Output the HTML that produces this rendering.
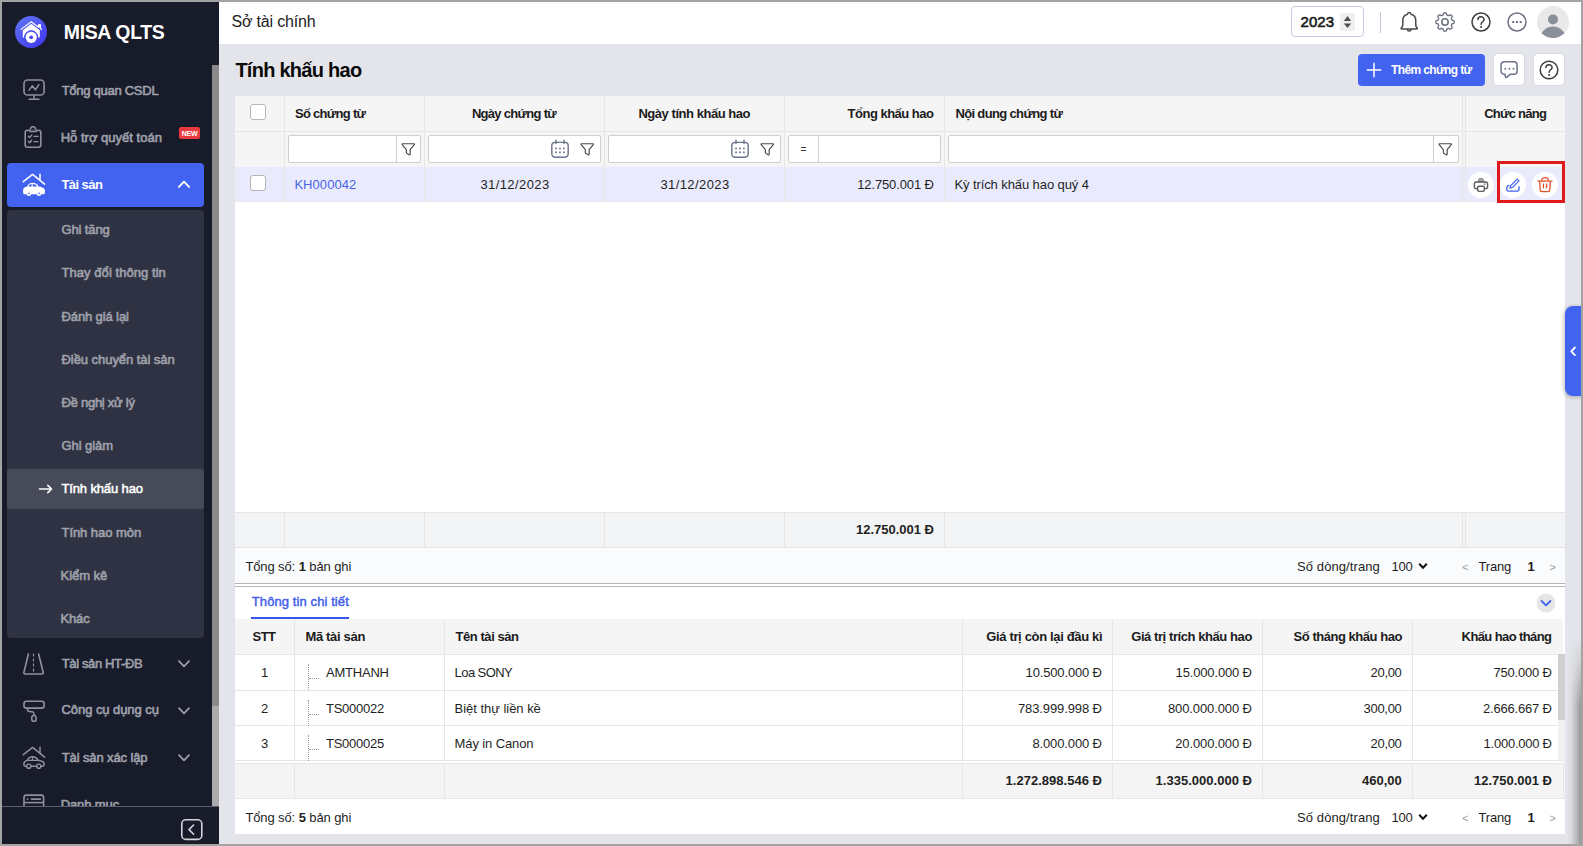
<!DOCTYPE html>
<html lang="vi"><head><meta charset="utf-8"><title>MISA QLTS - Tính khấu hao</title>
<style>
html,body{margin:0;padding:0;}
body{width:1583px;height:846px;overflow:hidden;position:relative;background:#e4e5ea;font-family:"Liberation Sans", sans-serif;}
.r{position:absolute;box-sizing:border-box;}
.t{position:absolute;white-space:nowrap;line-height:20px;height:20px;font-family:"Liberation Sans", sans-serif;}
b{font-weight:700;}
</style></head><body>
<div class="r" style="left:2px;top:2px;width:217px;height:842px;background:#181b2a;"></div>
<div class="r" style="left:212px;top:65px;width:7px;height:641px;background:#8a8a8a;"></div>
<div class="r" style="left:212px;top:706px;width:7px;height:100px;background:#ababab;"></div>
<svg class="r" style="left:15px;top:16px;" width="32" height="32" viewBox="0 0 32 32" fill="none"><defs><linearGradient id="lg" x1="0.1" y1="0" x2="0.9" y2="1"><stop offset="0" stop-color="#5d75f3"/><stop offset="1" stop-color="#4236ee"/></linearGradient></defs>
<circle cx="16" cy="16" r="16" fill="url(#lg)"/>
<path d="M6 13.4 L16.2 5.7 L23.6 11.3 V8.6 H25.4 V12.6 L26.6 13.5" stroke="#fff" stroke-width="1.1" fill="none" stroke-linejoin="round" stroke-linecap="round"/>
<path d="M23.8 8.8 H25.2 V12 L23.8 11 Z" fill="#fff"/>
<path d="M7.8 14.2 L16.2 7.8 L24.8 14.2 V21.6 H23.2 A7 7 0 0 0 9.2 21.6 H7.8 Z" fill="#fff"/>
<circle cx="16.2" cy="21.3" r="6.6" fill="none" stroke="#4a4ff0" stroke-width="1"/>
<circle cx="16.2" cy="21.3" r="5.6" fill="#fff"/>
<circle cx="16.2" cy="21.3" r="1.9" fill="#4747ee"/></svg>
<span class="t" style="left:63.80px;top:22px;font-size:19.5px;font-weight:700;color:#ffffff;letter-spacing:-0.376px;">MISA QLTS</span>
<svg class="r" style="left:22px;top:78px;" width="24" height="24" viewBox="0 0 24 24" fill="none"><rect x="2" y="2" width="20.1" height="15" rx="3.6" stroke="#8f919d" stroke-width="1.6"/>
<path d="M12 17.4 V21.3 M7.2 21.3 H17" stroke="#8f919d" stroke-width="1.5" stroke-linecap="round"/>
<path d="M7.2 12.2 L10.2 7.8 L13.4 11.8 L16.9 6.7" stroke="#8f919d" stroke-width="1.5" stroke-linecap="round" stroke-linejoin="round"/></svg>
<span class="t" style="left:61.70px;top:81px;font-size:13px;font-weight:400;color:#9fa1ab;letter-spacing:-0.271px;-webkit-text-stroke:0.6px #9fa1ab;">Tổng quan CSDL</span>
<svg class="r" style="left:22px;top:125px;" width="24" height="24" viewBox="0 0 24 24" fill="none"><rect x="3.2" y="5.2" width="15.6" height="17" rx="2.4" stroke="#8f919d" stroke-width="1.6"/>
<path d="M7.6 5.2 V6.4 H14.4 V5.2 M8.4 4.6 C8.4 0.9 13.6 0.9 13.6 4.6" stroke="#8f919d" stroke-width="1.5" stroke-linejoin="round" fill="#181b2a"/>
<path d="M6.4 11.2 L7.7 12.5 L9.7 10.1 M12 11.4 H16 M6.4 16.4 L7.7 17.7 L9.7 15.3 M12 16.6 H16" stroke="#8f919d" stroke-width="1.4" stroke-linecap="round" stroke-linejoin="round"/></svg>
<span class="t" style="left:60.70px;top:128px;font-size:13px;font-weight:400;color:#9fa1ab;letter-spacing:0.013px;-webkit-text-stroke:0.6px #9fa1ab;">Hỗ trợ quyết toán</span>
<div class="r" style="left:179px;top:127px;width:21px;height:12px;background:#e83a3f;border-radius:2px;"></div>
<span class="t" style="left:189.50px;top:124px;font-size:7px;font-weight:700;color:#ffffff;letter-spacing:-0.200px;transform:translateX(-50%);">NEW</span>
<div class="r" style="left:7px;top:163px;width:197px;height:44px;background:#4262f0;border-radius:4px;"></div>
<svg class="r" style="left:22px;top:173px;" width="24" height="24" viewBox="0 0 24 24" fill="none"><path d="M1.3 8.7 L10.6 1.4 L22.6 11.2 M18 7.2 V1.2" stroke="#ffffff" stroke-width="1.5" stroke-linecap="round" stroke-linejoin="round"/><path d="M1.1 17.6 C1.1 15 2.6 14.2 5 13.6 C6.2 11 7.6 9.7 10.6 9.7 C13.6 9.7 15.2 11 16.6 13.4 C20.6 14 22.9 15 22.9 17.8 V19.4 C22.9 20.6 22 21.3 21 21.3 H3 C2 21.3 1.1 20.6 1.1 19.4 Z" fill="#ffffff"/><circle cx="6.9" cy="20.8" r="2.3" fill="#ffffff"/><circle cx="17" cy="20.8" r="2.3" fill="#ffffff"/><circle cx="6.9" cy="20.4" r="0.8" fill="#4262f0"/><circle cx="17" cy="20.4" r="0.8" fill="#4262f0"/><path d="M6.3 13.4 C6.9 11.9 7.8 11.1 9.6 11 V13.4 Z M10.7 11 C12.8 11 14 11.8 15 13.4 H10.7 Z" fill="#4262f0"/></svg>
<span class="t" style="left:61.40px;top:175px;font-size:13px;font-weight:700;color:#ffffff;letter-spacing:-0.542px;">Tài sản</span>
<svg class="r" style="left:178px;top:180px;" width="12" height="8" viewBox="0 0 12 8" fill="none"><path d="M1 6.8 L6 1.7 L11 6.8" stroke="#fff" stroke-width="1.9" stroke-linecap="round" stroke-linejoin="round"/></svg>
<div class="r" style="left:7px;top:210px;width:197px;height:428px;background:#2f3242;border-radius:4px;"></div>
<div class="r" style="left:7px;top:469px;width:197px;height:40px;background:#464a59;border-radius:3px;"></div>
<span class="t" style="left:61.50px;top:220px;font-size:13px;font-weight:400;color:#9fa1ab;letter-spacing:-0.131px;-webkit-text-stroke:0.6px #9fa1ab;">Ghi tăng</span>
<span class="t" style="left:61.50px;top:263px;font-size:13px;font-weight:400;color:#9fa1ab;letter-spacing:0.058px;-webkit-text-stroke:0.6px #9fa1ab;">Thay đổi thông tin</span>
<span class="t" style="left:61.50px;top:307px;font-size:13px;font-weight:400;color:#9fa1ab;letter-spacing:-0.115px;-webkit-text-stroke:0.6px #9fa1ab;">Đánh giá lại</span>
<span class="t" style="left:61.50px;top:350px;font-size:13px;font-weight:400;color:#9fa1ab;letter-spacing:-0.053px;-webkit-text-stroke:0.6px #9fa1ab;">Điều chuyển tài sản</span>
<span class="t" style="left:61.50px;top:393px;font-size:13px;font-weight:400;color:#9fa1ab;letter-spacing:-0.260px;-webkit-text-stroke:0.6px #9fa1ab;">Đề nghị xử lý</span>
<span class="t" style="left:61.50px;top:436px;font-size:13px;font-weight:400;color:#9fa1ab;letter-spacing:-0.056px;-webkit-text-stroke:0.6px #9fa1ab;">Ghi giảm</span>
<span class="t" style="left:61.45px;top:479px;font-size:13px;font-weight:400;color:#ffffff;letter-spacing:-0.132px;-webkit-text-stroke:0.5px #ffffff;">Tính khấu hao</span>
<span class="t" style="left:61.50px;top:523px;font-size:13px;font-weight:400;color:#9fa1ab;letter-spacing:-0.053px;-webkit-text-stroke:0.6px #9fa1ab;">Tính hao mòn</span>
<span class="t" style="left:60.50px;top:566px;font-size:13px;font-weight:400;color:#9fa1ab;letter-spacing:-0.022px;-webkit-text-stroke:0.6px #9fa1ab;">Kiểm kê</span>
<span class="t" style="left:60.50px;top:609px;font-size:13px;font-weight:400;color:#9fa1ab;letter-spacing:-0.144px;-webkit-text-stroke:0.6px #9fa1ab;">Khác</span>
<svg class="r" style="left:38px;top:483px;" width="16" height="12" viewBox="0 0 16 12" fill="none"><path d="M1.5 6 H13.5 M9.8 2.4 L13.6 6 L9.8 9.6" stroke="#fff" stroke-width="1.6" stroke-linecap="round" stroke-linejoin="round"/></svg>
<svg class="r" style="left:22px;top:652px;" width="24" height="24" viewBox="0 0 24 24" fill="none"><path d="M6.4 2 L1.9 20.2 C1.6 21.4 2.2 22 3.2 22 H19.9 C20.9 22 21.5 21.4 21.2 20.2 L16.6 2" stroke="#8f919d" stroke-width="1.6" stroke-linecap="round" stroke-linejoin="round"/>
<path d="M11.5 1.4 V20" stroke="#8f919d" stroke-width="1.2" stroke-dasharray="3.2 1.8"/></svg>
<span class="t" style="left:61.70px;top:654px;font-size:13px;font-weight:400;color:#9fa1ab;letter-spacing:-0.356px;-webkit-text-stroke:0.6px #9fa1ab;">Tài sản HT-ĐB</span>
<svg class="r" style="left:178px;top:659.5px;" width="12" height="8" viewBox="0 0 12 8" fill="none"><path d="M1 1.2 L6 6.3 L11 1.2" stroke="#9fa1ab" stroke-width="1.7" stroke-linecap="round" stroke-linejoin="round"/></svg>
<svg class="r" style="left:22px;top:699px;" width="24" height="24" viewBox="0 0 24 24" fill="none"><rect x="2" y="2.3" width="20.1" height="6.8" rx="2.4" stroke="#8f919d" stroke-width="1.6"/>
<path d="M5.5 9.4 V10.6 C5.5 11.9 6.2 12.4 7.4 12.5 L10 12.7 C11.4 12.9 11.9 13.6 11.9 14.6 V15.8" stroke="#8f919d" stroke-width="1.6" stroke-linecap="round"/>
<rect x="9.8" y="16.5" width="4.3" height="5.8" rx="2.1" stroke="#8f919d" stroke-width="1.6"/></svg>
<span class="t" style="left:61.50px;top:700px;font-size:13px;font-weight:400;color:#9fa1ab;letter-spacing:-0.062px;-webkit-text-stroke:0.6px #9fa1ab;">Công cụ dụng cụ</span>
<svg class="r" style="left:178px;top:706.5px;" width="12" height="8" viewBox="0 0 12 8" fill="none"><path d="M1 1.2 L6 6.3 L11 1.2" stroke="#9fa1ab" stroke-width="1.7" stroke-linecap="round" stroke-linejoin="round"/></svg>
<svg class="r" style="left:22px;top:746px;" width="24" height="24" viewBox="0 0 24 24" fill="none"><path d="M1.3 8.7 L10.6 1.4 L22.6 11.2 M18 7.2 V1.2" stroke="#8f919d" stroke-width="1.5" stroke-linecap="round" stroke-linejoin="round"/><path d="M1.9 17.4 C1.9 15.6 3 15 5.2 14.4 C6.4 11.8 7.8 10.7 10.6 10.7 C13.4 10.7 14.8 11.8 16.2 14.2 C20 14.8 22.1 15.6 22.1 17.8 V18.6 C22.1 19.6 21.4 20.2 20.6 20.2 H3.4 C2.6 20.2 1.9 19.6 1.9 18.6 Z" stroke="#8f919d" stroke-width="1.5" fill="none"/><circle cx="6.8" cy="20.2" r="2.1" fill="#181b2a" stroke="#8f919d" stroke-width="1.4"/><circle cx="16.8" cy="20.2" r="2.1" fill="#181b2a" stroke="#8f919d" stroke-width="1.4"/><path d="M5.6 14.4 H16 M10.4 11 V14.4" stroke="#8f919d" stroke-width="1.1"/></svg>
<span class="t" style="left:61.70px;top:748px;font-size:13px;font-weight:400;color:#9fa1ab;letter-spacing:-0.114px;-webkit-text-stroke:0.6px #9fa1ab;">Tài sản xác lập</span>
<svg class="r" style="left:178px;top:753.5px;" width="12" height="8" viewBox="0 0 12 8" fill="none"><path d="M1 1.2 L6 6.3 L11 1.2" stroke="#9fa1ab" stroke-width="1.7" stroke-linecap="round" stroke-linejoin="round"/></svg>
<svg class="r" style="left:22px;top:793px;" width="24" height="24" viewBox="0 0 24 24" fill="none"><rect x="2" y="2.1" width="19.6" height="18" rx="2.4" stroke="#8f919d" stroke-width="1.6"/>
<path d="M2 9.6 H21.6" stroke="#8f919d" stroke-width="1.5"/><circle cx="5.6" cy="6.1" r="0.9" fill="#8f919d"/><path d="M9.4 6.1 H18.4" stroke="#8f919d" stroke-width="1.6" stroke-linecap="round"/></svg>
<span class="t" style="left:60.70px;top:795px;font-size:13px;font-weight:400;color:#9fa1ab;letter-spacing:-0.107px;-webkit-text-stroke:0.6px #9fa1ab;">Danh mục</span>
<div class="r" style="left:2px;top:806px;width:217px;height:38px;background:#181b2a;border-top:1px solid #5d606e;"></div>
<svg class="r" style="left:181px;top:819px;" width="22" height="22" viewBox="0 0 22 22" fill="none"><rect x="0.8" y="0.8" width="20" height="19.6" rx="4" stroke="#d4d5da" stroke-width="1.6"/>
<path d="M12.6 6 L8 10.6 L12.6 15.2" stroke="#d4d5da" stroke-width="1.6" stroke-linecap="round" stroke-linejoin="round"/></svg>
<div class="r" style="left:219px;top:2px;width:1362px;height:42px;background:#ffffff;"></div>
<span class="t" style="left:231.40px;top:12px;font-size:16px;font-weight:400;color:#212121;letter-spacing:-0.163px;">Sở tài chính</span>
<div class="r" style="left:1291px;top:6px;width:73px;height:31px;background:#ffffff;border:1px solid #c6cce0;border-radius:4px;"></div>
<span class="t" style="left:1300.50px;top:12px;font-size:15px;font-weight:400;color:#1c1c1c;letter-spacing:0.058px;-webkit-text-stroke:0.6px #1c1c1c;">2023</span>
<div class="r" style="left:1340px;top:13px;width:15px;height:18px;background:#f0f0f0;"></div>
<svg class="r" style="left:1340px;top:13px;" width="15" height="18" viewBox="0 0 15 18" fill="none"><path d="M7.5 3 L11.2 8 H3.8 Z M7.5 15 L11.2 10.4 H3.8 Z" fill="#505050"/></svg>
<div class="r" style="left:1380px;top:12px;width:1px;height:21px;background:#c2c7d6;"></div>
<svg class="r" style="left:1397px;top:10px;" width="24" height="24" viewBox="0 0 24 24" fill="none"><path d="M12.2 2.6 C13.2 2.6 13.8 3.3 13.9 4.3 C17 5 18.75 7.2 18.75 10.6 V14.4 C18.75 16.1 19.2 17 20 17.8 C20.6 18.4 20.3 19 19.5 19 H4.9 C4.1 19 3.8 18.4 4.4 17.8 C5.2 17 5.85 16.1 5.85 14.4 V10.6 C5.85 7.2 7.4 5 10.5 4.3 C10.6 3.3 11.2 2.6 12.2 2.6 Z" stroke="#484848" stroke-width="1.5" stroke-linejoin="round"/>
<path d="M10.3 19.6 C10.6 21.4 13.8 21.4 14.1 19.6" stroke="#484848" stroke-width="1.4" stroke-linecap="round"/></svg>
<svg class="r" style="left:1433px;top:10px;" width="24" height="24" viewBox="0 0 24 24" fill="none"><path d="M12.00 2.80 L12.36 2.82 L12.72 2.88 L13.06 3.04 L13.36 3.40 L13.59 4.01 L13.77 4.62 L13.98 4.99 L14.21 5.19 L14.46 5.33 L14.72 5.44 L14.98 5.54 L15.25 5.62 L15.56 5.65 L15.97 5.53 L16.53 5.22 L17.12 4.95 L17.58 4.92 L17.94 5.05 L18.24 5.25 L18.51 5.49 L18.75 5.76 L18.95 6.06 L19.08 6.42 L19.05 6.88 L18.78 7.47 L18.47 8.03 L18.35 8.44 L18.38 8.75 L18.46 9.02 L18.56 9.28 L18.67 9.54 L18.81 9.79 L19.01 10.02 L19.38 10.23 L19.99 10.41 L20.60 10.64 L20.96 10.94 L21.12 11.28 L21.18 11.64 L21.20 12.00 L21.18 12.36 L21.12 12.72 L20.96 13.06 L20.60 13.36 L19.99 13.59 L19.38 13.77 L19.01 13.98 L18.81 14.21 L18.67 14.46 L18.56 14.72 L18.46 14.98 L18.38 15.25 L18.35 15.56 L18.47 15.97 L18.78 16.53 L19.05 17.12 L19.08 17.58 L18.95 17.94 L18.75 18.24 L18.51 18.51 L18.24 18.75 L17.94 18.95 L17.58 19.08 L17.12 19.05 L16.53 18.78 L15.97 18.47 L15.56 18.35 L15.25 18.38 L14.98 18.46 L14.72 18.56 L14.46 18.67 L14.21 18.81 L13.98 19.01 L13.77 19.38 L13.59 19.99 L13.36 20.60 L13.06 20.96 L12.72 21.12 L12.36 21.18 L12.00 21.20 L11.64 21.18 L11.28 21.12 L10.94 20.96 L10.64 20.60 L10.41 19.99 L10.23 19.38 L10.02 19.01 L9.79 18.81 L9.54 18.67 L9.28 18.56 L9.02 18.46 L8.75 18.38 L8.44 18.35 L8.03 18.47 L7.47 18.78 L6.88 19.05 L6.42 19.08 L6.06 18.95 L5.76 18.75 L5.49 18.51 L5.25 18.24 L5.05 17.94 L4.92 17.58 L4.95 17.12 L5.22 16.53 L5.53 15.97 L5.65 15.56 L5.62 15.25 L5.54 14.98 L5.44 14.72 L5.33 14.46 L5.19 14.21 L4.99 13.98 L4.62 13.77 L4.01 13.59 L3.40 13.36 L3.04 13.06 L2.88 12.72 L2.82 12.36 L2.80 12.00 L2.82 11.64 L2.88 11.28 L3.04 10.94 L3.40 10.64 L4.01 10.41 L4.62 10.23 L4.99 10.02 L5.19 9.79 L5.33 9.54 L5.44 9.28 L5.54 9.02 L5.62 8.75 L5.65 8.44 L5.53 8.03 L5.22 7.47 L4.95 6.88 L4.92 6.42 L5.05 6.06 L5.25 5.76 L5.49 5.49 L5.76 5.25 L6.06 5.05 L6.42 4.92 L6.88 4.95 L7.47 5.22 L8.03 5.53 L8.44 5.65 L8.75 5.62 L9.02 5.54 L9.28 5.44 L9.54 5.33 L9.79 5.19 L10.02 4.99 L10.23 4.62 L10.41 4.01 L10.64 3.40 L10.94 3.04 L11.28 2.88 L11.64 2.82 Z" stroke="#6c7182" stroke-width="1.4" stroke-linejoin="round"/><circle cx="12" cy="12" r="3.2" stroke="#6c7182" stroke-width="1.5"/></svg>
<svg class="r" style="left:1469px;top:10px;" width="24" height="24" viewBox="0 0 24 24" fill="none"><circle cx="12" cy="12" r="9" stroke="#3c3c3c" stroke-width="1.5"/><path d="M8.9 9.6 C8.9 5.9 15.1 5.9 15.1 9.5 C15.1 11.8 12.1 11.7 12.1 14.2" stroke="#3c3c3c" stroke-width="1.5" stroke-linecap="round" fill="none"/><circle cx="12.1" cy="17" r="1" fill="#3c3c3c"/></svg>
<svg class="r" style="left:1505px;top:10px;" width="24" height="24" viewBox="0 0 24 24" fill="none"><circle cx="12" cy="12" r="9" stroke="#6c7182" stroke-width="1.5"/><rect x="7.3" y="11" width="2" height="2" fill="#6c7182"/><rect x="11" y="11" width="2" height="2" fill="#6c7182"/><rect x="14.7" y="11" width="2" height="2" fill="#6c7182"/></svg>
<svg class="r" style="left:1537px;top:5.5px;" width="32" height="32" viewBox="0 0 32 32" fill="none"><defs><clipPath id="av"><circle cx="16" cy="16" r="16"/></clipPath></defs><circle cx="16" cy="16" r="16" fill="#e9e9e9"/>
<g clip-path="url(#av)"><circle cx="16" cy="13.4" r="5" fill="#8b8e9b"/><ellipse cx="16" cy="32" rx="12.6" ry="11.4" fill="#8b8e9b"/></g></svg>
<span class="t" style="left:235.40px;top:60px;font-size:20px;font-weight:700;color:#0a0a0a;letter-spacing:-0.737px;">Tính khấu hao</span>
<div class="r" style="left:1358px;top:54px;width:127px;height:32px;background:#4262f0;border-radius:4px;"></div>
<svg class="r" style="left:1366px;top:62px;" width="16" height="16" viewBox="0 0 16 16" fill="none"><path d="M8 1.2 V14.8 M1.2 8 H14.8" stroke="#fff" stroke-width="1.5" stroke-linecap="round"/></svg>
<span class="t" style="left:1391.00px;top:60px;font-size:12px;font-weight:700;color:#ffffff;letter-spacing:-0.627px;">Thêm chứng từ</span>
<div class="r" style="left:1494px;top:54px;width:30px;height:31px;background:#ffffff;border-radius:4px;box-shadow:0 0 0 1px rgba(205,210,226,.55);"></div>
<svg class="r" style="left:1497px;top:58px;" width="24" height="24" viewBox="0 0 24 24" fill="none"><path d="M7.4 3.7 H16.8 C19 3.7 20.1 4.8 20.1 7 V12.9 C20.1 15.1 19 16.2 16.8 16.2 H13.4 L9.6 19.3 C9 19.7 8.5 19.4 8.4 18.8 L8 16.2 H7.4 C5.2 16.2 4.1 15.1 4.1 12.9 V7 C4.1 4.8 5.2 3.7 7.4 3.7 Z" stroke="#6d748b" stroke-width="1.5" stroke-linejoin="round"/>
<circle cx="8.3" cy="10.7" r="0.95" fill="#6d748b"/><circle cx="12.4" cy="10.7" r="0.95" fill="#6d748b"/><circle cx="16.5" cy="10.7" r="0.95" fill="#6d748b"/></svg>
<div class="r" style="left:1534px;top:54px;width:30px;height:31px;background:#ffffff;border-radius:4px;box-shadow:0 0 0 1px rgba(205,210,226,.55);"></div>
<svg class="r" style="left:1537px;top:58px;" width="24" height="24" viewBox="0 0 24 24" fill="none"><circle cx="12" cy="12" r="8.8" stroke="#3c3c3c" stroke-width="1.5"/><path d="M8.9 9.6 C8.9 5.9 15.1 5.9 15.1 9.5 C15.1 11.8 12.1 11.7 12.1 14.2" stroke="#3c3c3c" stroke-width="1.5" stroke-linecap="round" fill="none"/><circle cx="12.1" cy="17" r="1" fill="#3c3c3c"/></svg>
<div class="r" style="left:235px;top:96px;width:1330px;height:738px;background:#ffffff;"></div>
<div class="r" style="left:235px;top:96px;width:1330px;height:71px;background:#f5f5f5;"></div>
<div class="r" style="left:235px;top:131px;width:1330px;height:1px;background:#e6e6e6;"></div>
<div class="r" style="left:235px;top:167px;width:1330px;height:34px;background:#e9ebfd;"></div>
<div class="r" style="left:235px;top:201px;width:1330px;height:1px;background:#ebebeb;"></div>
<div class="r" style="left:284px;top:96px;width:1px;height:106px;background:#e6e6e6;"></div>
<div class="r" style="left:424px;top:96px;width:1px;height:106px;background:#e6e6e6;"></div>
<div class="r" style="left:604px;top:96px;width:1px;height:106px;background:#e6e6e6;"></div>
<div class="r" style="left:784px;top:96px;width:1px;height:106px;background:#e6e6e6;"></div>
<div class="r" style="left:944px;top:96px;width:1px;height:106px;background:#e6e6e6;"></div>
<div class="r" style="left:1462px;top:96px;width:1px;height:106px;background:#e6e6e6;"></div>
<div class="r" style="left:1465px;top:96px;width:1px;height:106px;background:#e6e6e6;"></div>
<div class="r" style="left:250px;top:104px;width:16px;height:16px;background:#ffffff;border:1px solid #b5b5b5;border-radius:3px;"></div>
<div class="r" style="left:250px;top:175px;width:16px;height:16px;background:#ffffff;border:1px solid #b5b5b5;border-radius:3px;"></div>
<span class="t" style="left:295.00px;top:104px;font-size:13px;font-weight:700;color:#1b1b1b;letter-spacing:-0.713px;">Số chứng từ</span>
<span class="t" style="left:471.90px;top:104px;font-size:13px;font-weight:700;color:#1b1b1b;letter-spacing:-0.701px;">Ngày chứng từ</span>
<span class="t" style="left:638.40px;top:104px;font-size:13px;font-weight:700;color:#1b1b1b;letter-spacing:-0.456px;">Ngày tính khấu hao</span>
<span class="t" style="left:847.60px;top:104px;font-size:13px;font-weight:700;color:#1b1b1b;letter-spacing:-0.508px;">Tổng khấu hao</span>
<span class="t" style="left:955.40px;top:104px;font-size:13px;font-weight:700;color:#1b1b1b;letter-spacing:-0.646px;">Nội dung chứng từ</span>
<span class="t" style="left:1484.20px;top:104px;font-size:13px;font-weight:700;color:#1b1b1b;letter-spacing:-0.750px;">Chức năng</span>
<div class="r" style="left:288px;top:135px;width:133px;height:28px;background:#ffffff;border:1px solid #cfcfcf;border-radius:2px;"></div>
<div class="r" style="left:396px;top:136px;width:1px;height:26px;background:#cfcfcf;"></div>
<svg class="r" style="left:401px;top:141.5px;" width="14.5" height="14.5" viewBox="0 0 16 16" fill="none"><path d="M1.7 1.9 H14.3 C14.9 1.9 15 2.5 14.7 2.9 L10.1 8.3 V13.6 C10.1 14.3 9.5 14.5 9 14.2 L6.5 12.5 C6.1 12.2 5.9 11.9 5.9 11.4 V8.3 L1.3 2.9 C1 2.5 1.1 1.9 1.7 1.9 Z" stroke="#4a4a4a" stroke-width="1.3" stroke-linejoin="round"/></svg>
<div class="r" style="left:428px;top:135px;width:173px;height:28px;background:#ffffff;border:1px solid #cfcfcf;border-radius:2px;"></div>
<svg class="r" style="left:550px;top:138.5px;" width="20" height="20" viewBox="0 0 20 20" fill="none"><rect x="1.8" y="3.4" width="16.4" height="14.8" rx="3.4" stroke="#6b7289" stroke-width="1.4"/><path d="M6 1.2 V4.6 M14 1.2 V4.6" stroke="#6b7289" stroke-width="1.4" stroke-linecap="round"/><rect x="5.2" y="8.6" width="1.7" height="1.7" fill="#6b7289"/><rect x="5.2" y="12.5" width="1.7" height="1.7" fill="#6b7289"/><rect x="9.1" y="8.6" width="1.7" height="1.7" fill="#6b7289"/><rect x="9.1" y="12.5" width="1.7" height="1.7" fill="#6b7289"/><rect x="13.0" y="8.6" width="1.7" height="1.7" fill="#6b7289"/><rect x="13.0" y="12.5" width="1.7" height="1.7" fill="#6b7289"/></svg>
<svg class="r" style="left:580px;top:141.5px;" width="14.5" height="14.5" viewBox="0 0 16 16" fill="none"><path d="M1.7 1.9 H14.3 C14.9 1.9 15 2.5 14.7 2.9 L10.1 8.3 V13.6 C10.1 14.3 9.5 14.5 9 14.2 L6.5 12.5 C6.1 12.2 5.9 11.9 5.9 11.4 V8.3 L1.3 2.9 C1 2.5 1.1 1.9 1.7 1.9 Z" stroke="#4a4a4a" stroke-width="1.3" stroke-linejoin="round"/></svg>
<div class="r" style="left:608px;top:135px;width:173px;height:28px;background:#ffffff;border:1px solid #cfcfcf;border-radius:2px;"></div>
<svg class="r" style="left:730px;top:138.5px;" width="20" height="20" viewBox="0 0 20 20" fill="none"><rect x="1.8" y="3.4" width="16.4" height="14.8" rx="3.4" stroke="#6b7289" stroke-width="1.4"/><path d="M6 1.2 V4.6 M14 1.2 V4.6" stroke="#6b7289" stroke-width="1.4" stroke-linecap="round"/><rect x="5.2" y="8.6" width="1.7" height="1.7" fill="#6b7289"/><rect x="5.2" y="12.5" width="1.7" height="1.7" fill="#6b7289"/><rect x="9.1" y="8.6" width="1.7" height="1.7" fill="#6b7289"/><rect x="9.1" y="12.5" width="1.7" height="1.7" fill="#6b7289"/><rect x="13.0" y="8.6" width="1.7" height="1.7" fill="#6b7289"/><rect x="13.0" y="12.5" width="1.7" height="1.7" fill="#6b7289"/></svg>
<svg class="r" style="left:760px;top:141.5px;" width="14.5" height="14.5" viewBox="0 0 16 16" fill="none"><path d="M1.7 1.9 H14.3 C14.9 1.9 15 2.5 14.7 2.9 L10.1 8.3 V13.6 C10.1 14.3 9.5 14.5 9 14.2 L6.5 12.5 C6.1 12.2 5.9 11.9 5.9 11.4 V8.3 L1.3 2.9 C1 2.5 1.1 1.9 1.7 1.9 Z" stroke="#4a4a4a" stroke-width="1.3" stroke-linejoin="round"/></svg>
<div class="r" style="left:788px;top:135px;width:153px;height:28px;background:#ffffff;border:1px solid #cfcfcf;border-radius:2px;"></div>
<div class="r" style="left:818px;top:136px;width:1px;height:26px;background:#cfcfcf;"></div>
<span class="t" style="left:803.50px;top:140px;font-size:10px;font-weight:400;color:#333;transform:translateX(-50%);">=</span>
<div class="r" style="left:948px;top:135px;width:511px;height:28px;background:#ffffff;border:1px solid #cfcfcf;border-radius:2px;"></div>
<div class="r" style="left:1433px;top:136px;width:1px;height:26px;background:#cfcfcf;"></div>
<svg class="r" style="left:1438px;top:141.5px;" width="14.5" height="14.5" viewBox="0 0 16 16" fill="none"><path d="M1.7 1.9 H14.3 C14.9 1.9 15 2.5 14.7 2.9 L10.1 8.3 V13.6 C10.1 14.3 9.5 14.5 9 14.2 L6.5 12.5 C6.1 12.2 5.9 11.9 5.9 11.4 V8.3 L1.3 2.9 C1 2.5 1.1 1.9 1.7 1.9 Z" stroke="#4a4a4a" stroke-width="1.3" stroke-linejoin="round"/></svg>
<span class="t" style="left:294.40px;top:175px;font-size:13px;font-weight:400;color:#4a63e6;letter-spacing:0.056px;">KH000042</span>
<span class="t" style="left:480.40px;top:175px;font-size:13px;font-weight:400;color:#1f1f1f;letter-spacing:0.419px;">31/12/2023</span>
<span class="t" style="left:660.40px;top:175px;font-size:13px;font-weight:400;color:#1f1f1f;letter-spacing:0.419px;">31/12/2023</span>
<span class="t" style="left:857.20px;top:175px;font-size:13px;font-weight:400;color:#1f1f1f;letter-spacing:-0.125px;">12.750.001 Đ</span>
<span class="t" style="left:954.40px;top:175px;font-size:13px;font-weight:400;color:#1f1f1f;letter-spacing:-0.089px;">Kỳ trích khấu hao quý 4</span>
<div class="r" style="left:1468px;top:172px;width:26px;height:26px;background:#ffffff;border-radius:50%;"></div>
<div class="r" style="left:1500px;top:172px;width:26px;height:26px;background:#ffffff;border-radius:50%;"></div>
<div class="r" style="left:1532px;top:172px;width:26px;height:26px;background:#ffffff;border-radius:50%;"></div>
<svg class="r" style="left:1473px;top:177px;" width="16" height="16" viewBox="0 0 16 16" fill="none"><path d="M5 4.8 L5.6 2.4 C5.8 1.6 6.3 1.3 7 1.3 H9 C9.7 1.3 10.2 1.6 10.4 2.4 L11 4.8 Z" fill="#a2a2a2" stroke="#8c8c8c" stroke-width="0.8"/>
<path d="M4.2 11.6 H3.2 C2 11.6 1.4 11 1.4 9.8 V6.8 C1.4 5.6 2 5 3.2 5 H12.8 C14 5 14.6 5.6 14.6 6.8 V9.8 C14.6 11 14 11.6 12.8 11.6 H11.8" stroke="#5c5c5c" stroke-width="1.4"/>
<path d="M4.6 10.6 C4.6 9.6 5.2 9.2 6 9.2 H10 C10.8 9.2 11.4 9.6 11.4 10.6 V12.6 C11.4 13.8 10.8 14.4 9.6 14.4 H6.4 C5.2 14.4 4.6 13.8 4.6 12.6 Z" stroke="#5c5c5c" stroke-width="1.4" stroke-linejoin="round"/><rect x="10.8" y="6.6" width="1.8" height="1" fill="#444"/></svg>
<svg class="r" style="left:1505px;top:177px;" width="16" height="16" viewBox="0 0 16 16" fill="none"><path d="M3.8 8.4 C2.4 8.8 1.8 9.6 1.8 10.8 V12.4 C1.8 13.6 2.4 14.2 3.6 14.2 H12.2 C13.4 14.2 14 13.6 14 12.4 V9.6" stroke="#4262f0" stroke-width="1.3" stroke-linecap="round"/>
<path d="M4.9 11 L5.8 8.5 L12.2 2.1 L14 3.9 L7.6 10.3 Z" stroke="#4262f0" stroke-width="1.2" stroke-linejoin="round"/></svg>
<svg class="r" style="left:1537px;top:176px;" width="16" height="17" viewBox="0 0 16 17" fill="none"><path d="M0.9 5.2 H15.1" stroke="#e2502a" stroke-width="1.2" stroke-linecap="round"/>
<path d="M4.7 5 V4.2 C4.7 0.7 11.3 0.7 11.3 4.2 V5" stroke="#e2502a" stroke-width="1.2"/>
<path d="M2.7 5.4 L3.2 13.9 C3.3 15 4 15.6 5 15.6 H11 C12 15.6 12.7 15 12.8 13.9 L13.3 5.4" stroke="#e2502a" stroke-width="1.3" stroke-linejoin="round"/>
<path d="M6.4 7.4 V12.2 M9.6 7.4 V12.2" stroke="#e2502a" stroke-width="1.3"/></svg>
<div class="r" style="left:1497px;top:161px;width:68px;height:42px;background:transparent;border:3px solid #e01a1a;"></div>
<div class="r" style="left:235px;top:512px;width:1330px;height:36px;background:#f3f4f5;border-top:1px solid #e6e6e6;border-bottom:1px solid #e6e6e6;"></div>
<div class="r" style="left:284px;top:513px;width:1px;height:34px;background:#e6e6e6;"></div>
<div class="r" style="left:424px;top:513px;width:1px;height:34px;background:#e6e6e6;"></div>
<div class="r" style="left:604px;top:513px;width:1px;height:34px;background:#e6e6e6;"></div>
<div class="r" style="left:784px;top:513px;width:1px;height:34px;background:#e6e6e6;"></div>
<div class="r" style="left:944px;top:513px;width:1px;height:34px;background:#e6e6e6;"></div>
<div class="r" style="left:1462px;top:513px;width:1px;height:34px;background:#e6e6e6;"></div>
<div class="r" style="left:1465px;top:513px;width:1px;height:34px;background:#e6e6e6;"></div>
<span class="t" style="left:856.00px;top:520px;font-size:13px;font-weight:700;color:#1f1f1f;letter-spacing:-0.016px;">12.750.001 Đ</span>
<div class="r" style="left:235px;top:548px;width:1330px;height:35px;background:#fafbfd;"></div>
<span class="t" style="left:245.40px;top:557px;font-size:13px;font-weight:400;color:#1f1f1f;letter-spacing:-0.106px;">Tổng số: <b>1</b> bản ghi</span>
<span class="t" style="left:1297.00px;top:557px;font-size:13px;font-weight:400;color:#1f1f1f;letter-spacing:0.096px;">Số dòng/trang</span>
<span class="t" style="left:1391.40px;top:557px;font-size:13px;font-weight:400;color:#1f1f1f;letter-spacing:-0.230px;">100</span>
<svg class="r" style="left:1417px;top:562px;" width="12" height="9" viewBox="0 0 12 9" fill="none"><path d="M2.2 1.8 L6 5.8 L9.8 1.8" stroke="#111" stroke-width="2" stroke-linejoin="miter" stroke-linecap="butt"/></svg>
<span class="t" style="left:1462.00px;top:557px;font-size:11px;font-weight:400;color:#9a9a9a;letter-spacing:-0.400px;">&lt;</span>
<span class="t" style="left:1478.60px;top:557px;font-size:13px;font-weight:400;color:#1f1f1f;letter-spacing:-0.212px;">Trang</span>
<span class="t" style="left:1527.40px;top:557px;font-size:13px;font-weight:700;color:#1f1f1f;letter-spacing:-2.400px;">1</span>
<span class="t" style="left:1549.40px;top:557px;font-size:11px;font-weight:400;color:#9a9a9a;letter-spacing:-0.200px;">&gt;</span>
<div class="r" style="left:235px;top:583px;width:1330px;height:1px;background:#b4b4b4;"></div>
<div class="r" style="left:235px;top:584px;width:1330px;height:2px;background:#ffffff;"></div>
<div class="r" style="left:235px;top:586px;width:1330px;height:1px;background:#b4b4b4;"></div>
<span class="t" style="left:251.82px;top:592px;font-size:13px;font-weight:400;color:#4360ea;letter-spacing:0.093px;-webkit-text-stroke:0.45px #4360ea;">Thông tin chi tiết</span>
<div class="r" style="left:251px;top:617px;width:98px;height:2px;background:#3557f0;"></div>
<svg class="r" style="left:1535.5px;top:592.5px;" width="20" height="20" viewBox="0 0 20 20" fill="none"><circle cx="10" cy="10" r="9.4" fill="#e5e5e8"/><path d="M5.6 8 L10 12.4 L14.4 8" stroke="#4262f0" stroke-width="1.8" stroke-linecap="round" stroke-linejoin="round"/></svg>
<div class="r" style="left:235px;top:619px;width:1328px;height:35px;background:#f5f5f5;"></div>
<div class="r" style="left:235px;top:654px;width:1323px;height:1px;background:#e6e6e6;"></div>
<div class="r" style="left:294px;top:619px;width:1px;height:142px;background:#e6e6e6;"></div>
<div class="r" style="left:444px;top:619px;width:1px;height:142px;background:#e6e6e6;"></div>
<div class="r" style="left:962px;top:619px;width:1px;height:142px;background:#e6e6e6;"></div>
<div class="r" style="left:1112px;top:619px;width:1px;height:142px;background:#e6e6e6;"></div>
<div class="r" style="left:1262px;top:619px;width:1px;height:142px;background:#e6e6e6;"></div>
<div class="r" style="left:1412px;top:619px;width:1px;height:142px;background:#e6e6e6;"></div>
<div class="r" style="left:235px;top:690px;width:1323px;height:1px;background:#e6e6e6;"></div>
<div class="r" style="left:235px;top:725px;width:1323px;height:1px;background:#e6e6e6;"></div>
<div class="r" style="left:235px;top:760px;width:1323px;height:1px;background:#e6e6e6;"></div>
<span class="t" style="left:252.60px;top:627px;font-size:13px;font-weight:700;color:#1b1b1b;letter-spacing:-0.606px;">STT</span>
<span class="t" style="left:305.40px;top:627px;font-size:13px;font-weight:700;color:#1b1b1b;letter-spacing:-0.324px;">Mã tài sản</span>
<span class="t" style="left:455.60px;top:627px;font-size:13px;font-weight:700;color:#1b1b1b;letter-spacing:-0.457px;">Tên tài sản</span>
<span class="t" style="left:986.20px;top:627px;font-size:13px;font-weight:700;color:#1b1b1b;letter-spacing:-0.339px;">Giá trị còn lại đầu kì</span>
<span class="t" style="left:1131.20px;top:627px;font-size:13px;font-weight:700;color:#1b1b1b;letter-spacing:-0.423px;">Giá trị trích khấu hao</span>
<span class="t" style="left:1293.60px;top:627px;font-size:13px;font-weight:700;color:#1b1b1b;letter-spacing:-0.471px;">Số tháng khấu hao</span>
<span class="t" style="left:1461.60px;top:627px;font-size:13px;font-weight:700;color:#1b1b1b;letter-spacing:-0.606px;">Khấu hao tháng</span>
<span class="t" style="left:264.50px;top:663px;font-size:13px;font-weight:400;color:#1f1f1f;transform:translateX(-50%);">1</span>
<div class="r" style="left:308px;top:664px;width:1px;height:26px;background:transparent;border-left:1px dotted #9a9a9a;"></div>
<div class="r" style="left:309px;top:678px;width:10px;height:1px;background:transparent;border-top:1px dotted #9a9a9a;"></div>
<span class="t" style="left:326.00px;top:663px;font-size:13px;font-weight:400;color:#1f1f1f;letter-spacing:-0.215px;">AMTHANH</span>
<span class="t" style="left:454.60px;top:663px;font-size:13px;font-weight:400;color:#1f1f1f;letter-spacing:-0.582px;">Loa SONY</span>
<span class="t" style="left:1025.60px;top:663px;font-size:13px;font-weight:400;color:#1f1f1f;letter-spacing:-0.152px;">10.500.000 Đ</span>
<span class="t" style="left:1175.60px;top:663px;font-size:13px;font-weight:400;color:#1f1f1f;letter-spacing:-0.152px;">15.000.000 Đ</span>
<span class="t" style="left:1370.60px;top:663px;font-size:13px;font-weight:400;color:#1f1f1f;letter-spacing:-0.325px;">20,00</span>
<span class="t" style="left:1493.40px;top:663px;font-size:13px;font-weight:400;color:#1f1f1f;letter-spacing:-0.175px;">750.000 Đ</span>
<span class="t" style="left:264.50px;top:699px;font-size:13px;font-weight:400;color:#1f1f1f;transform:translateX(-50%);">2</span>
<div class="r" style="left:308px;top:700px;width:1px;height:26px;background:transparent;border-left:1px dotted #9a9a9a;"></div>
<div class="r" style="left:309px;top:714px;width:10px;height:1px;background:transparent;border-top:1px dotted #9a9a9a;"></div>
<span class="t" style="left:326.00px;top:699px;font-size:13px;font-weight:400;color:#1f1f1f;letter-spacing:-0.252px;">TS000022</span>
<span class="t" style="left:454.60px;top:699px;font-size:13px;font-weight:400;color:#1f1f1f;letter-spacing:-0.034px;">Biệt thự liền kề</span>
<span class="t" style="left:1018.00px;top:699px;font-size:13px;font-weight:400;color:#1f1f1f;letter-spacing:-0.109px;">783.999.998 Đ</span>
<span class="t" style="left:1168.00px;top:699px;font-size:13px;font-weight:400;color:#1f1f1f;letter-spacing:-0.109px;">800.000.000 Đ</span>
<span class="t" style="left:1363.60px;top:699px;font-size:13px;font-weight:400;color:#1f1f1f;letter-spacing:-0.306px;">300,00</span>
<span class="t" style="left:1483.00px;top:699px;font-size:13px;font-weight:400;color:#1f1f1f;letter-spacing:-0.185px;">2.666.667 Đ</span>
<span class="t" style="left:264.50px;top:734px;font-size:13px;font-weight:400;color:#1f1f1f;transform:translateX(-50%);">3</span>
<div class="r" style="left:308px;top:735px;width:1px;height:26px;background:transparent;border-left:1px dotted #9a9a9a;"></div>
<div class="r" style="left:309px;top:749px;width:10px;height:1px;background:transparent;border-top:1px dotted #9a9a9a;"></div>
<span class="t" style="left:326.00px;top:734px;font-size:13px;font-weight:400;color:#1f1f1f;letter-spacing:-0.252px;">TS000025</span>
<span class="t" style="left:454.60px;top:734px;font-size:13px;font-weight:400;color:#1f1f1f;letter-spacing:-0.116px;">Máy in Canon</span>
<span class="t" style="left:1032.40px;top:734px;font-size:13px;font-weight:400;color:#1f1f1f;letter-spacing:-0.125px;">8.000.000 Đ</span>
<span class="t" style="left:1175.20px;top:734px;font-size:13px;font-weight:400;color:#1f1f1f;letter-spacing:-0.116px;">20.000.000 Đ</span>
<span class="t" style="left:1370.60px;top:734px;font-size:13px;font-weight:400;color:#1f1f1f;letter-spacing:-0.325px;">20,00</span>
<span class="t" style="left:1483.60px;top:734px;font-size:13px;font-weight:400;color:#1f1f1f;letter-spacing:-0.245px;">1.000.000 Đ</span>
<div class="r" style="left:1558px;top:655px;width:7px;height:107px;background:#f1f1f1;"></div>
<div class="r" style="left:1558px;top:654px;width:7px;height:66px;background:#d0d0d0;"></div>
<div class="r" style="left:235px;top:763px;width:1330px;height:36px;background:#f4f4f4;border-top:1px solid #e6e6e6;border-bottom:1px solid #e6e6e6;"></div>
<div class="r" style="left:294px;top:764px;width:1px;height:34px;background:#e6e6e6;"></div>
<div class="r" style="left:444px;top:764px;width:1px;height:34px;background:#e6e6e6;"></div>
<div class="r" style="left:962px;top:764px;width:1px;height:34px;background:#e6e6e6;"></div>
<div class="r" style="left:1112px;top:764px;width:1px;height:34px;background:#e6e6e6;"></div>
<div class="r" style="left:1262px;top:764px;width:1px;height:34px;background:#e6e6e6;"></div>
<div class="r" style="left:1412px;top:764px;width:1px;height:34px;background:#e6e6e6;"></div>
<div class="r" style="left:1563px;top:764px;width:1px;height:34px;background:#e6e6e6;"></div>
<span class="t" style="left:1005.60px;top:771px;font-size:13px;font-weight:700;color:#1f1f1f;letter-spacing:0.018px;">1.272.898.546 Đ</span>
<span class="t" style="left:1155.60px;top:771px;font-size:13px;font-weight:700;color:#1f1f1f;letter-spacing:0.018px;">1.335.000.000 Đ</span>
<span class="t" style="left:1362.00px;top:771px;font-size:13px;font-weight:700;color:#1f1f1f;letter-spacing:0.014px;">460,00</span>
<span class="t" style="left:1474.00px;top:771px;font-size:13px;font-weight:700;color:#1f1f1f;letter-spacing:-0.007px;">12.750.001 Đ</span>
<span class="t" style="left:245.40px;top:808px;font-size:13px;font-weight:400;color:#1f1f1f;letter-spacing:-0.106px;">Tổng số: <b>5</b> bản ghi</span>
<span class="t" style="left:1297.00px;top:808px;font-size:13px;font-weight:400;color:#1f1f1f;letter-spacing:0.096px;">Số dòng/trang</span>
<span class="t" style="left:1391.40px;top:808px;font-size:13px;font-weight:400;color:#1f1f1f;letter-spacing:-0.230px;">100</span>
<svg class="r" style="left:1417px;top:813px;" width="12" height="9" viewBox="0 0 12 9" fill="none"><path d="M2.2 1.8 L6 5.8 L9.8 1.8" stroke="#111" stroke-width="2" stroke-linejoin="miter" stroke-linecap="butt"/></svg>
<span class="t" style="left:1462.00px;top:808px;font-size:11px;font-weight:400;color:#9a9a9a;letter-spacing:-0.400px;">&lt;</span>
<span class="t" style="left:1478.60px;top:808px;font-size:13px;font-weight:400;color:#1f1f1f;letter-spacing:-0.212px;">Trang</span>
<span class="t" style="left:1527.40px;top:808px;font-size:13px;font-weight:700;color:#1f1f1f;letter-spacing:-2.400px;">1</span>
<span class="t" style="left:1549.40px;top:808px;font-size:11px;font-weight:400;color:#9a9a9a;letter-spacing:-0.200px;">&gt;</span>
<div class="r" style="left:1565px;top:306px;width:18px;height:90px;background:#4262f0;border-radius:8px 0 0 8px;box-shadow:-1px 1px 4px rgba(0,0,0,.28);"></div>
<svg class="r" style="left:1568px;top:345px;" width="10" height="12" viewBox="0 0 10 12" fill="none"><path d="M6.9 2.5 L3.3 6.3 L6.9 10.1" stroke="#fff" stroke-width="1.9" stroke-linecap="round" stroke-linejoin="round"/></svg>
<div class="r" style="left:1567px;top:636px;width:14px;height:208px;background:transparent;background:linear-gradient(to right, rgba(105,105,105,0) 0%, rgba(105,105,105,.09) 30%, rgba(105,105,105,.3) 62%, rgba(100,100,100,.62) 100%);-webkit-mask-image:linear-gradient(to bottom, transparent 0, rgba(0,0,0,.25) 24px, #000 70px);mask-image:linear-gradient(to bottom, transparent 0, rgba(0,0,0,.25) 24px, #000 70px);"></div>
<div class="r" style="left:0px;top:0px;width:1583px;height:846px;background:transparent;border:2px solid #a3a3a3;"></div>
</body></html>
